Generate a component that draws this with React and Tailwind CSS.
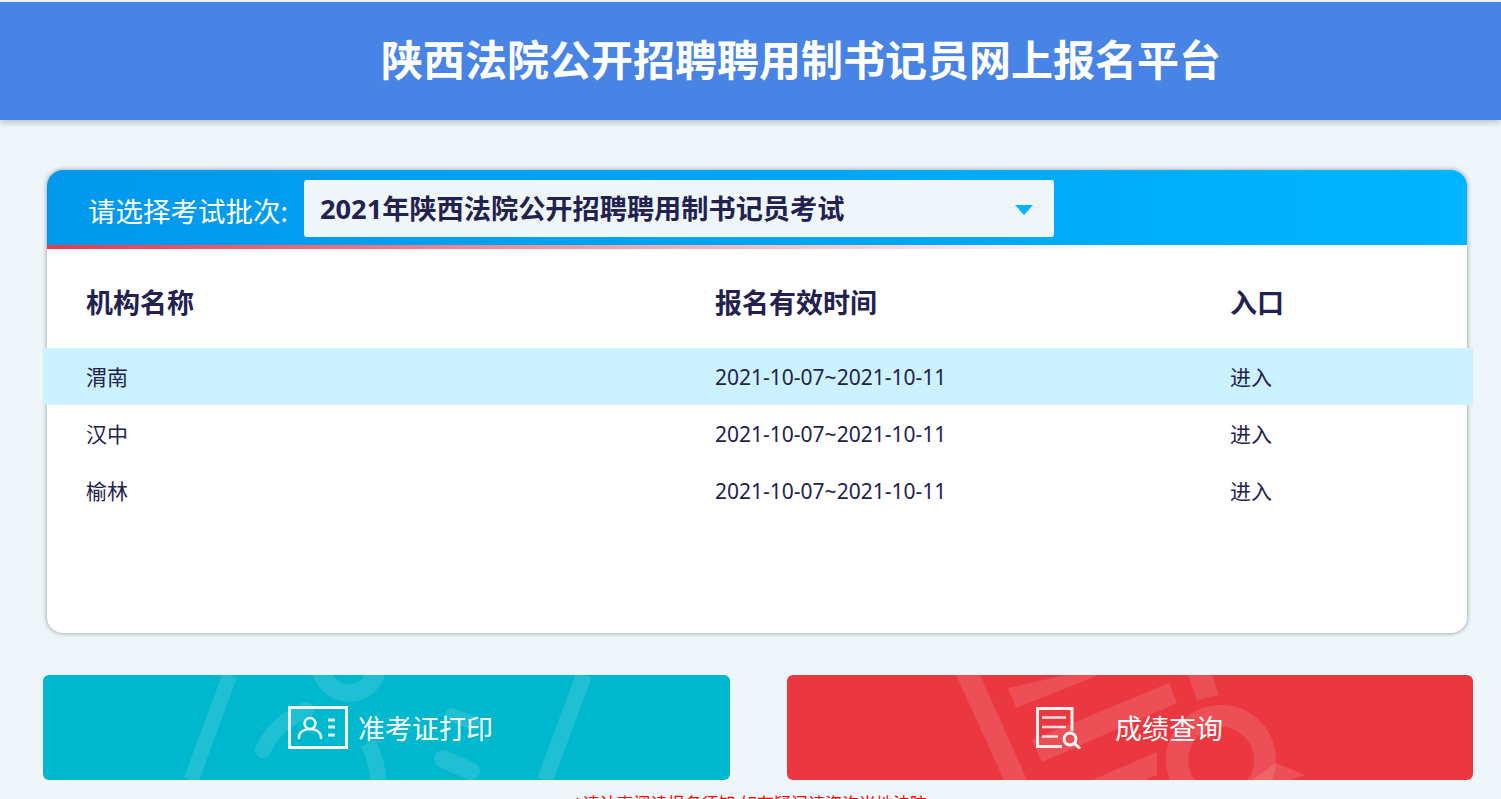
const font = { fontFamily: '"Noto Sans", "Noto Sans CJK SC", sans-serif' };

const rows = [
  { name: "渭南", active: true },
  { name: "汉中" },
  { name: "榆林" },
];

function TicketMark() {
  return (
    <svg className="absolute inset-0 w-full h-full" viewBox="0 0 687 105" fill="none" stroke="#fff" strokeOpacity="0.12">
      <path d="M187 0 L148 105" strokeWidth="15" />
      <path d="M541 0 L502 105" strokeWidth="16" />
      <circle cx="306" cy="-10" r="28" strokeWidth="18" />
      <path d="M220 75 C228 58 242 44 263 35" strokeWidth="16" strokeLinecap="round" />
      <path d="M325 68 C331 80 335 92 335 105" strokeWidth="16" />
      <path d="M400 84 L428 96" strokeWidth="18" strokeLinecap="round" />
      <path d="M409 40 L430 48" strokeWidth="14" strokeLinecap="round" />
    </svg>
  );
}

function ScoreMark() {
  return (
    <svg className="absolute inset-0 w-full h-full" viewBox="0 0 686 105" fill="none">
      <g fill="#fff" fillOpacity="0.12">
        <path d="M169 0 L193 0 L240 105 L217 105 Z" />
        <path d="M221 13 L279 0 L312 0 L229 33 Z" />
        <path d="M382 8 L390 28 L255 87 L245 65 Z" />
        <path d="M370 77 L370 100 L358 105 L305 105 Z" />
        <path d="M401 0 L410 25 L432 20 L425 0 Z" />
        <path d="M489 88 L518 100 L503 105 L465 105 Z" />
      </g>
      <circle cx="434" cy="85" r="44" stroke="#fff" strokeOpacity="0.12" strokeWidth="22" />
    </svg>
  );
}

function TicketIcon() {
  return (
    <svg width="60" height="43" viewBox="0 0 60 43" fill="none" stroke="#fff" className="shrink-0">
      <rect x="1.5" y="1.5" width="57" height="40" strokeWidth="3" strokeOpacity="0.95" />
      <circle cx="22" cy="17.5" r="5.5" strokeWidth="2.6" strokeOpacity="0.9" />
      <path d="M11 32 C11 26 16 23 22 23 C28 23 33 26 33 32" strokeWidth="2.6" strokeOpacity="0.9" strokeLinecap="round" />
      <path d="M40 14 H47 M40 21 H47 M40 29 H47" strokeWidth="2.8" strokeOpacity="0.85" />
    </svg>
  );
}

function ScoreIcon() {
  return (
    <svg width="46" height="42" viewBox="0 0 46 42" fill="none" stroke="#fff" className="shrink-0">
      <path d="M26 39.5 H1.5 V1.5 H36 V24" strokeWidth="3" strokeOpacity="0.92" />
      <path d="M6 10.5 H30 M6 20 H30 M6 29.5 H22" strokeWidth="2.6" strokeOpacity="0.85" />
      <circle cx="34" cy="32" r="6" strokeWidth="2.8" />
      <path d="M38.5 36.5 L44 41.5" strokeWidth="2.8" />
    </svg>
  );
}

export default function App() {
  return (
    <div className="w-[1501px] h-[799px] overflow-hidden bg-[#eef6f9] pt-[2px]" style={font}>
      <header className="h-[118px] bg-[#4884e6] shadow-[0_3px_6px_rgba(0,0,0,0.2)] flex items-center justify-center pl-[101px] pb-[3px]">
        <h1 className="text-[42px] font-bold text-white leading-none">陕西法院公开招聘聘用制书记员网上报名平台</h1>
      </header>

      <main className="pl-[43px] pr-[28px] pt-[50px]">
        <section className="ml-[4px] mr-[6px] h-[463px] bg-white rounded-[16px] shadow-[0_0_5px_rgba(0,0,0,0.4)]">
          <div className="h-[75px] rounded-t-[16px] bg-gradient-to-r from-[#0098ed] to-[#00b4ff] flex items-start pl-[41px] pt-[10px]">
            <span className="w-[216px] text-[27.5px] leading-[64px] text-white">请选择考试批次:</span>
            <div className="w-[750px] h-[57px] bg-[#eef6f9] rounded-[3px] flex items-center justify-between pl-[16px] pr-[21px]">
              <span className="text-[27.2px] font-bold text-[#23214f] leading-none">2021年陕西法院公开招聘聘用制书记员考试</span>
              <span className="w-0 h-0 border-x-[9px] border-x-transparent border-t-[10px] border-t-[#00b4ff] mt-[2px]"></span>
            </div>
          </div>
          <div className="h-[4px] bg-gradient-to-r from-[#e8394a] to-transparent to-[75%]"></div>

          <div className="grid grid-cols-[629px_515px_1fr] pl-[39px] h-[99px] items-center text-[27px] font-bold text-[#23214f] pt-[10px]">
            <span>机构名称</span>
            <span>报名有效时间</span>
            <span>入口</span>
          </div>

          {rows.map((row) => (
            <div
              key={row.name}
              className={`-ml-[4px] -mr-[6px] pl-[43px] pt-[3px] h-[57px] grid grid-cols-[629px_515px_1fr] items-center text-[21px] text-[#23214f] ${row.active ? "bg-[#ccf1ff]" : ""}`}
            >
              <span>{row.name}</span>
              <span>2021-10-07~2021-10-11</span>
              <span>进入</span>
            </div>
          ))}
        </section>

        <div className="flex justify-between mt-[42px]">
          <button className="relative w-[687px] h-[105px] bg-[#00b8ce] rounded-[6px] overflow-hidden flex items-center text-white text-[27px] pl-[245px]">
            <TicketMark />
            <span className="relative flex items-center gap-[10px]">
              <TicketIcon />
              <span className="pt-[3px]">准考证打印</span>
            </span>
          </button>
          <button className="relative w-[686px] h-[105px] bg-[#eb3740] rounded-[6px] overflow-hidden flex items-center text-white text-[27px] pl-[249px]">
            <ScoreMark />
            <span className="relative flex items-center gap-[33px]">
              <ScoreIcon />
              <span className="pt-[3px]">成绩查询</span>
            </span>
          </button>
        </div>

        <p className="mt-[14px] pr-[16px] text-center text-[17px] leading-[20px] text-[#ff0000]">*请认真阅读报名须知,如有疑问请咨询当地法院</p>
      </main>
    </div>
  );
}
